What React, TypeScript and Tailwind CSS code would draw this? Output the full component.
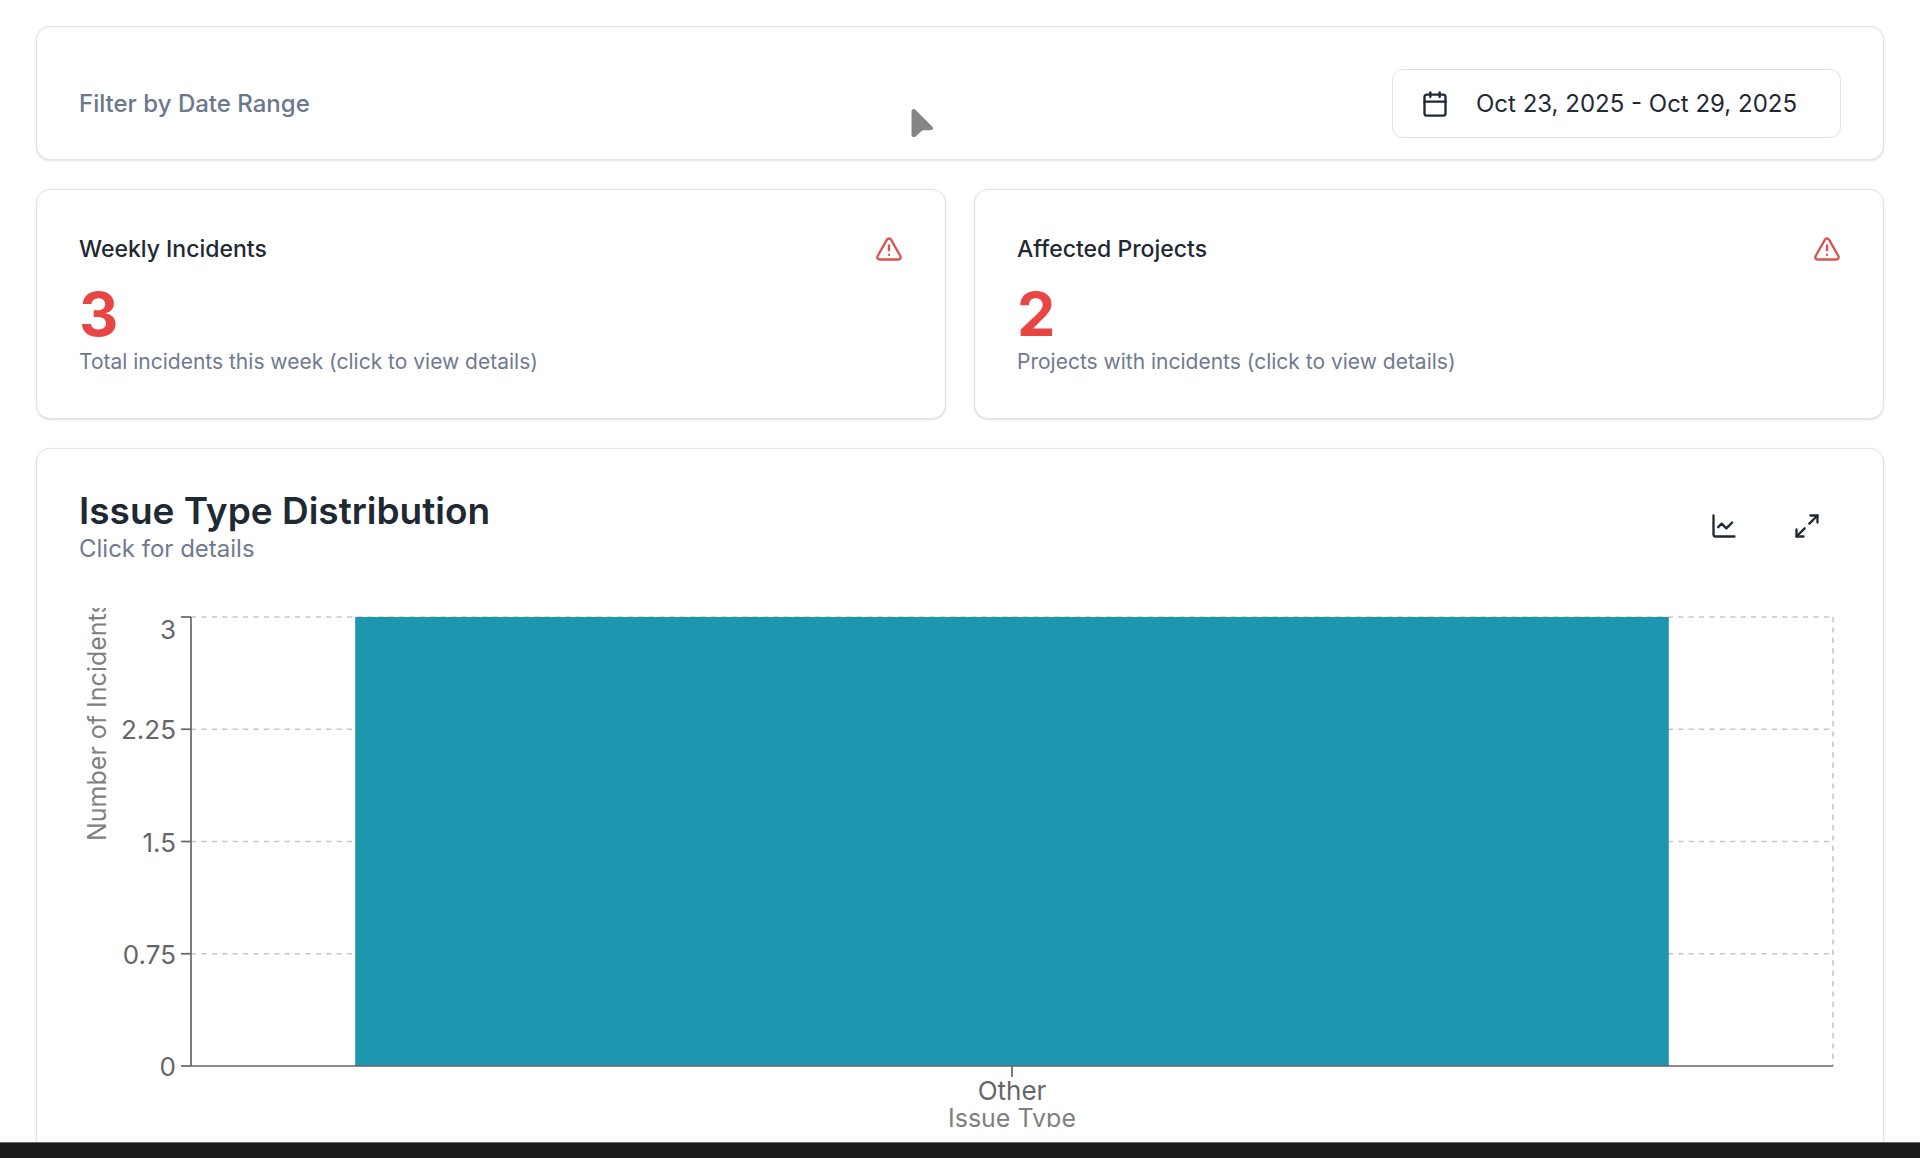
import React, { useLayoutEffect, useRef, useState } from 'react';
import { Calendar, ChartLine, Maximize2, TriangleAlert } from 'lucide-react';

const CHART_HEIGHT = 519;
const PLOT = { left: 112, top: 9, bottom: 458, right: 8 };
const MAX_VALUE = 3;
const yTicks = [0, 0.75, 1.5, 2.25, 3];
const issueTypes = [{ name: 'Other', count: 3 }];

const stats = [
  { title: 'Weekly Incidents', value: 3, note: 'Total incidents this week (click to view details)' },
  { title: 'Affected Projects', value: 2, note: 'Projects with incidents (click to view details)' },
];

const cardClass = 'rounded-[14px] border border-[#dfe2ea] bg-white shadow-sm';

function StatCard({ title, value, note }: { title: string; value: number; note: string }) {
  return (
    <button type="button" className={`${cardClass} flex-1 px-[42px] py-[42px] text-left`}>
      <div className="flex items-center justify-between">
        <h3 className="text-[23px] leading-[34px] font-medium text-[#1f2933]">{title}</h3>
        <TriangleAlert className="size-7 text-[#d9534f]" />
      </div>
      <div className="mt-[14px] text-[61px] leading-[68px] font-bold text-[#ea4545]">{value}</div>
      <p className="text-[21px] leading-7 text-[#6f7a8f]">{note}</p>
    </button>
  );
}

function IssueChart() {
  const ref = useRef<HTMLDivElement>(null);
  const [width, setWidth] = useState(1762);

  useLayoutEffect(() => {
    const el = ref.current;
    if (!el) return;
    const update = () => setWidth(el.clientWidth);
    update();
    const observer = new ResizeObserver(update);
    observer.observe(el);
    return () => observer.disconnect();
  }, []);

  const right = width - PLOT.right;
  const plotWidth = right - PLOT.left;
  const band = plotWidth / issueTypes.length;
  const y = (value: number) => PLOT.bottom - (value / MAX_VALUE) * (PLOT.bottom - PLOT.top);

  return (
    <div ref={ref} className="w-full overflow-hidden">
      <svg width={width} height={CHART_HEIGHT} className="block text-[26px]" role="img" aria-label="Issue Type Distribution">
        <g stroke="#c8c8c8" strokeWidth="1.7" strokeDasharray="5.2 5.2">
          {yTicks.slice(1).map((tick) => (
            <line key={tick} x1={PLOT.left} x2={right} y1={y(tick)} y2={y(tick)} />
          ))}
          <line x1={right} x2={right} y1={PLOT.top} y2={PLOT.bottom} />
        </g>

        {issueTypes.map((item, i) => (
          <rect
            key={item.name}
            x={PLOT.left + band * (i + 0.1)}
            y={y(item.count)}
            width={band * 0.8}
            height={PLOT.bottom - y(item.count)}
            fill="#1f96b0"
          />
        ))}

        {/* axes */}
        <g stroke="#666666" strokeWidth="1.7">
          <line x1={PLOT.left} x2={PLOT.left} y1={PLOT.top} y2={PLOT.bottom} />
          <line x1={PLOT.left} x2={right} y1={PLOT.bottom} y2={PLOT.bottom} />
          {yTicks.map((tick) => (
            <line key={tick} x1={PLOT.left - 10} x2={PLOT.left} y1={y(tick)} y2={y(tick)} />
          ))}
          {issueTypes.map((item, i) => (
            <line
              key={item.name}
              x1={PLOT.left + band * (i + 0.5)}
              x2={PLOT.left + band * (i + 0.5)}
              y1={PLOT.bottom}
              y2={PLOT.bottom + 11}
            />
          ))}
        </g>

        <g fill="#666666">
          {yTicks.map((tick) => (
            <text key={tick} x={PLOT.left - 15} y={Math.max(y(tick) + 10, 31)} textAnchor="end">
              {tick}
            </text>
          ))}
          {issueTypes.map((item, i) => (
            <text key={item.name} x={PLOT.left + band * (i + 0.5)} y="492" textAnchor="middle">
              {item.name}
            </text>
          ))}
        </g>

        <g fill="#808080" className="text-[25px]">
          <text transform="translate(27 233) rotate(-90)">Number of Incidents</text>
          <text x={PLOT.left + plotWidth / 2} y={CHART_HEIGHT} textAnchor="middle">
            Issue Type
          </text>
        </g>
      </svg>
    </div>
  );
}

export default function App() {
  const [chartType, setChartType] = useState('bar');

  return (
    <div className="relative flex h-screen flex-col overflow-hidden bg-white font-['Inter',sans-serif]">
      <main className="flex min-h-0 flex-1 flex-col gap-[29px] overflow-hidden px-9 pt-[26px]">
        <section className={`${cardClass} flex shrink-0 items-center justify-between px-[42px] pt-[42px] pb-[21px]`}>
          <h2 className="text-[24px] leading-[34px] font-medium text-[#6b778c]">Filter by Date Range</h2>
          <button
            type="button"
            className="flex h-[69px] w-[449px] items-center gap-[27px] rounded-[11px] border border-[#dfe2ea] px-7 text-[24px] text-[#1f2933]"
          >
            <Calendar className="size-7" />
            <span>Oct 23, 2025 - Oct 29, 2025</span>
          </button>
        </section>

        <section className="flex shrink-0 gap-7">
          {stats.map((stat) => (
            <StatCard key={stat.title} {...stat} />
          ))}
        </section>

        <section className={`${cardClass} shrink-0 px-[42px] pt-[42px] pb-10`}>
          <div className="mb-[41px] flex items-start justify-between">
            <div>
              <h2 className="text-[37px] leading-10 font-semibold text-[#1f2933]">Issue Type Distribution</h2>
              <p className="text-[24px] leading-9 text-[#6f7a8f]">Click for details</p>
            </div>
            <div className="flex gap-[14px] text-[#1f2933]">
              <button
                type="button"
                aria-label="Switch chart type"
                onClick={() => setChartType(chartType === 'bar' ? 'line' : 'bar')}
                className="flex size-[69px] items-center justify-center rounded-[11px]"
              >
                <ChartLine className="size-7" />
              </button>
              <button
                type="button"
                aria-label="Expand chart"
                className="flex size-[69px] items-center justify-center rounded-[11px]"
              >
                <Maximize2 className="size-7" />
              </button>
            </div>
          </div>
          <IssueChart />
        </section>
      </main>

      <footer className="h-4 shrink-0 border-t border-[#6b6b6b] bg-[#1c1c1c]" />

      {/* pointer */}
      <svg className="pointer-events-none absolute top-[108px] left-[910px]" width="24" height="30" viewBox="0 0 24 30" fill="#858585">
        <path d="M1.5 3.5C1.5 1.2 4 .3 5.6 1.9L22.2 18.6C23.8 20.2 22.8 22.3 20.6 22.3H13.8C12.8 22.3 12 22.6 11.3 23.3L5.6 28.4C4 29.8 1.5 29 1.5 26.8Z" />
      </svg>
    </div>
  );
}
